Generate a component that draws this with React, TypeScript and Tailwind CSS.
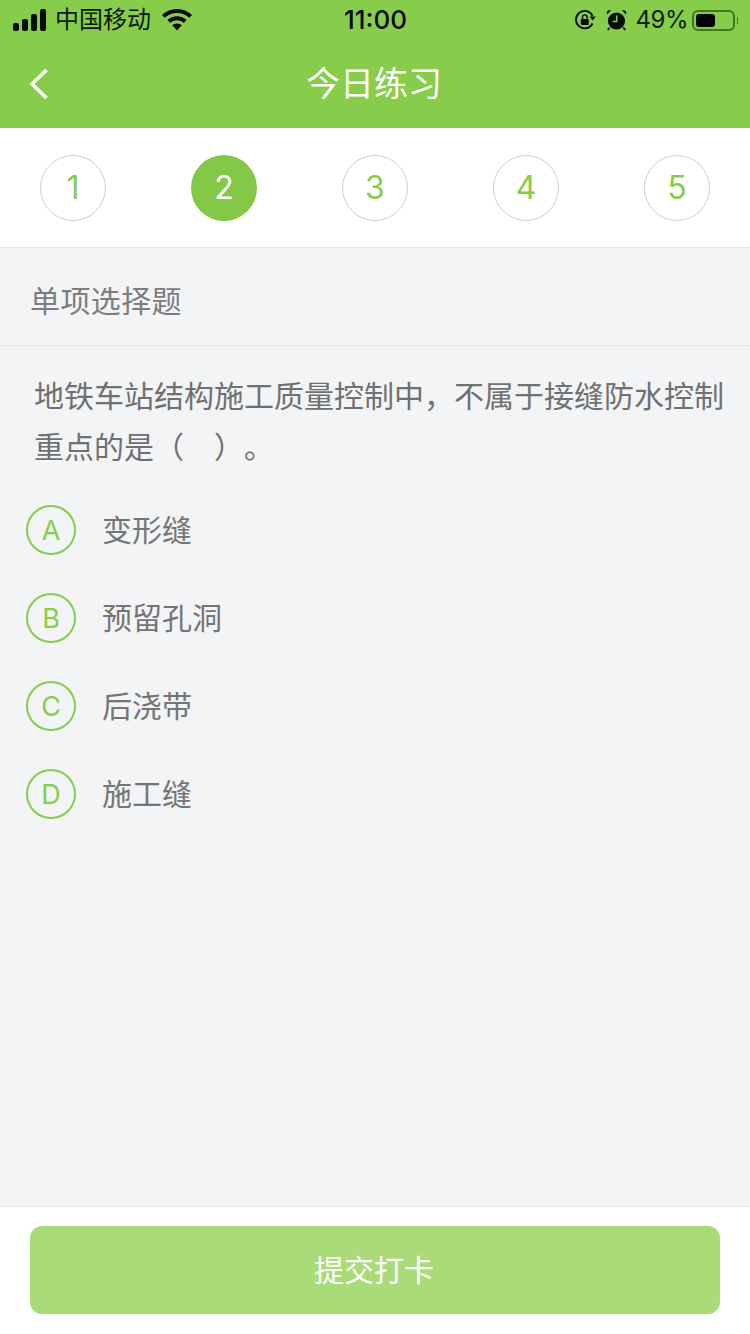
import React from "react";

const cjk = "font-['Liberation_Sans','Noto_Sans_CJK_SC',sans-serif]";
const digit = "font-['Inter',sans-serif] font-normal";

const steps = [1, 2, 3, 4, 5];
const options = [
  { key: "A", label: "变形缝" },
  { key: "B", label: "预留孔洞" },
  { key: "C", label: "后浇带" },
  { key: "D", label: "施工缝" },
];

const StatusBar = () => (
  <div className="grid grid-cols-[1fr_auto_1fr] items-center h-10 pl-[13px] pr-[12px] text-[#0b1a05]">
    <div className="flex items-center">
      <svg width="34" height="22" viewBox="0 0 34 22" fill="#0a0a0a">
        <rect x="0" y="14" width="6" height="8" rx="2" />
        <rect x="9" y="10" width="6" height="12" rx="2" />
        <rect x="18" y="5" width="6" height="17" rx="2" />
        <rect x="27" y="0" width="6" height="22" rx="2" />
      </svg>
      <span className="ml-2 text-[24px] leading-none">中国移动</span>
      <svg className="ml-[11px]" width="30" height="22" viewBox="0 0 30 22" fill="#0a0a0a">
        <path d="M15 0C9.2 0 4 2.2 0 5.9l2.7 2.9C6 5.7 10.3 3.9 15 3.9s9 1.8 12.3 4.9L30 5.9C26 2.2 20.8 0 15 0z" />
        <path d="M15 7.2c-3.7 0-7.1 1.4-9.6 3.8l2.8 2.9c1.8-1.7 4.2-2.7 6.8-2.7s5 1 6.8 2.7l2.8-2.9C22.1 8.6 18.7 7.2 15 7.2z" />
        <path d="M15 14.4c-1.9 0-3.5.7-4.8 1.9L15 21.5l4.8-5.2c-1.3-1.2-2.9-1.9-4.8-1.9z" />
      </svg>
    </div>
    <span className="text-[26px] leading-none font-medium text-[#0a0a0a] font-['Inter',sans-serif]">11:00</span>
    <div className="flex items-center justify-end">
      <svg width="22" height="22" viewBox="0 0 22 22" fill="none">
        <path d="M18.5 14.5A8.7 8.7 0 1 1 18.6 7" stroke="#0a0a0a" strokeWidth="1.8" />
        <path d="M15.5 7.5h6.2l-3.1 4z" fill="#0a0a0a" />
        <rect x="6.8" y="10" width="8" height="6" rx="1" fill="#0a0a0a" />
        <path d="M8.5 10V8.2a2.3 2.3 0 0 1 4.6 0V10" stroke="#0a0a0a" strokeWidth="1.4" />
      </svg>
      <svg className="ml-[10px]" width="21" height="22" viewBox="0 0 21 22" fill="#0a0a0a">
        <circle cx="10.5" cy="12" r="8.6" />
        <path d="M1 5.5 5 1.5 2.7.9.7 2.9zM20 5.5l-4-4 2.3-.6 2 2z" />
        <path d="M3.7 18.5 1.8 21M17.3 18.5l1.9 2.5" stroke="#0a0a0a" strokeWidth="1.6" />
        <path d="M10.7 6.5v6H6.6" stroke="#87cd4b" strokeWidth="1.4" fill="none" />
      </svg>
      <span className="ml-[9px] text-[24px] leading-none tracking-[-0.5px] text-[#10200a] font-['Inter',sans-serif]">49%</span>
      <div className="ml-[4px] flex items-center">
        <div className="flex items-center w-[43px] h-[21px] rounded-[6px] border-2 border-[#3f7a20] p-[2px]">
          <div className="h-full w-[19px] rounded-[3px] bg-[#050505]" />
        </div>
        <div className="ml-[2px] w-[1px] h-[7px] bg-[#3f7a20]" />
      </div>
    </div>
  </div>
);

const App = () => {
  return (
    <div className={`flex flex-col w-[750px] h-[1334px] bg-[#f3f4f6] ${cjk}`}>
      <div className="h-[128px] bg-[#87cd4b]">
        <StatusBar />
        <div className="relative flex items-center justify-center h-[88px] pr-[2px]">
          <svg className="absolute left-[29px] top-[28px]" width="20" height="32" viewBox="0 0 20 32" fill="none">
            <path d="M17.5 2 3 16l14.5 14" stroke="#ffffff" strokeWidth="3.4" />
          </svg>
          <span className="text-[34px] leading-none text-white">今日练习</span>
        </div>
      </div>

      <div className="flex items-start justify-between h-[120px] px-10 pt-[27px] bg-white border-b border-[#e6e7e9]">
        {steps.map((n) => (
          <div
            key={n}
            className={
              n === 2
                ? `flex items-center justify-center w-[66px] h-[66px] rounded-full bg-[#83c846] text-[32px] text-white ${digit}`
                : `flex items-center justify-center w-[66px] h-[66px] rounded-full border border-[#cfcfcf] text-[32px] text-[#87cd4b] ${digit}`
            }
          >
            {n}
          </div>
        ))}
      </div>

      <div className="flex flex-1 flex-col">
        <div className="flex items-center h-[98px] pt-[10px] pl-[30px] border-b border-[#e6e7e9] text-[30px] tracking-[0.4px] text-[#7c7d7f]">
          单项选择题
        </div>
        <p className="pt-[25px] pl-[34px] pr-[25px] text-[30px] leading-[51px] text-[#6f7072] [text-spacing-trim:space-all]">
          地铁车站结构施工质量控制中，不属于接缝防水控制重点的是（　）。
        </p>
        <div className="flex flex-col mt-[13px]">
          {options.map((o) => (
            <div key={o.key} className="flex items-center h-[88px] pl-[26px]">
              <div className={`flex items-center justify-center w-[50px] h-[50px] pt-[2px] rounded-full border-2 border-[#87cd4b] text-[27px] text-[#87cd4b] ${digit}`}>
                {o.key}
              </div>
              <span className="ml-[26px] text-[30px] text-[#747577]">{o.label}</span>
            </div>
          ))}
        </div>
      </div>

      <div className="h-[128px] px-[30px] pt-[19px] bg-white border-t border-[#e6e7e9]">
        <div className="flex items-center justify-center h-[88px] pr-[2px] rounded-[12px] bg-[#a9dc78] text-[30px] text-white">
          提交打卡
        </div>
      </div>
    </div>
  );
};

export default App;
